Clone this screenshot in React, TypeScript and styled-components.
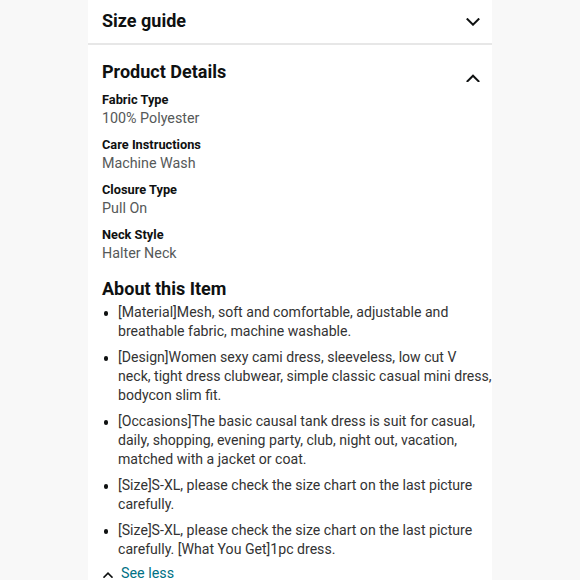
import React from "react";
import styled, { createGlobalStyle } from "styled-components";

const Global = createGlobalStyle`
  html, body { margin: 0; padding: 0; background: #f8f8f8; }
  body { font-family: Roboto, "Noto Sans", sans-serif; }
`;

const Page = styled.div`
  width: 580px;
  height: 580px;
  overflow: hidden;
  background: #f8f8f8;
  display: flex;
  justify-content: center;
`;

const Panel = styled.div`
  width: 404px;
  background: #ffffff;
  display: flex;
  flex-direction: column;
`;

const SectionHeader = styled.div<{ $divider?: boolean; $top: number }>`
  box-sizing: border-box;
  display: flex;
  align-items: flex-start;
  justify-content: space-between;
  flex-shrink: 0;
  height: ${(p) => (p.$divider ? "45px" : "auto")};
  padding: ${(p) => p.$top}px 12px 0 14px;
  border-bottom: ${(p) => (p.$divider ? "2px solid #e7e7e7" : "none")};
`;

const Heading = styled.h2`
  margin: 0;
  font-size: 18px;
  line-height: 24px;
  font-weight: 700;
  color: #0f1111;
`;

const ChevronSlot = styled.span<{ $offset: number }>`
  display: flex;
  margin-top: ${(p) => p.$offset}px;
`;

const Body = styled.div`
  padding: 7px 0 0 14px;
  display: flex;
  flex-direction: column;
`;

const Detail = styled.div`
  display: flex;
  flex-direction: column;
  margin-bottom: 9px;
`;

const Label = styled.div`
  font-size: 12.8px;
  line-height: 18px;
  font-weight: 700;
  color: #0f1111;
`;

const Value = styled.div`
  font-size: 14.3px;
  line-height: 18px;
  color: #565959;
`;

const AboutHeading = styled(Heading)`
  margin-top: 6px;
  margin-bottom: 2px;
`;

const List = styled.ul`
  margin: 0;
  padding: 0;
  list-style: none;
  display: flex;
  flex-direction: column;
  gap: 7px;
`;

const Item = styled.li`
  position: relative;
  padding-left: 16px;
  font-size: 14.1px;
  line-height: 19px;
  color: #333333;
  &::before {
    content: "";
    position: absolute;
    left: 1.5px;
    top: 8px;
    width: 4.5px;
    height: 4.5px;
    border-radius: 50%;
    background: #0f1111;
  }
`;

const SeeLess = styled.div`
  display: flex;
  align-items: center;
  gap: 8px;
  margin-top: 4px;
  padding-left: 1px;
  font-size: 14.3px;
  line-height: 20px;
  color: #007185;
`;

const SeeLessIcon = styled.span`
  display: flex;
  margin-top: 3px;
`;

const Chevron = ({ up, size = 14, stroke = 2 }: { up?: boolean; size?: number; stroke?: number }) => (
  <svg width={size} height={size * 0.6} viewBox="0 0 14 8.4" fill="none">
    <path
      d={up ? "M1.5 7.2 L7 1.7 L12.5 7.2" : "M1.5 1.2 L7 6.7 L12.5 1.2"}
      stroke="#0f1111"
      strokeWidth={stroke}
      strokeLinecap="square"
    />
  </svg>
);

const details = [
  ["Fabric Type", "100% Polyester"],
  ["Care Instructions", "Machine Wash"],
  ["Closure Type", "Pull On"],
  ["Neck Style", "Halter Neck"],
];

const bullets = [
  "[Material]Mesh, soft and comfortable, adjustable and breathable fabric, machine washable.",
  "[Design]Women sexy cami dress, sleeveless, low cut V neck, tight dress clubwear, simple classic casual mini dress, bodycon slim fit.",
  "[Occasions]The basic causal tank dress is suit for casual, daily, shopping, evening party, club, night out, vacation, matched with a jacket or coat.",
  "[Size]S-XL, please check the size chart on the last picture carefully.",
  "[Size]S-XL, please check the size chart on the last picture carefully. [What You Get]1pc dress.",
];

export default function App() {
  return (
    <>
      <Global />
      <Page>
        <Panel>
          <SectionHeader $divider $top={9}>
            <Heading>Size guide</Heading>
            <ChevronSlot $offset={9}>
              <Chevron />
            </ChevronSlot>
          </SectionHeader>
          <SectionHeader $top={15}>
            <Heading>Product Details</Heading>
            <ChevronSlot $offset={14}>
              <Chevron up />
            </ChevronSlot>
          </SectionHeader>
          <Body>
            {details.map(([l, v]) => (
              <Detail key={l}>
                <Label>{l}</Label>
                <Value>{v}</Value>
              </Detail>
            ))}
            <AboutHeading>About this Item</AboutHeading>
            <List>
              {bullets.map((b, i) => (
                <Item key={i}>{b}</Item>
              ))}
            </List>
            <SeeLess>
              <SeeLessIcon>
                <Chevron up size={10} stroke={2.2} />
              </SeeLessIcon>
              See less
            </SeeLess>
          </Body>
        </Panel>
      </Page>
    </>
  );
}
